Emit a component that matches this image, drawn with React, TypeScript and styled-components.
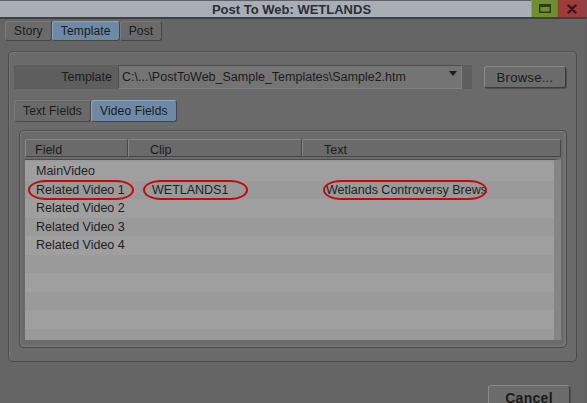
import React from "react";
import styled, { createGlobalStyle } from "styled-components";

const Global = createGlobalStyle`
  html, body { margin: 0; padding: 0; background: #666; overflow: hidden; }
  * { box-sizing: border-box; }
`;

const Window = styled.div`
  width: 587px;
  height: 403px;
  background: #656565;
  display: flex;
  flex-direction: column;
  font-family: "Liberation Sans", Arial, sans-serif;
  font-size: 12px;
  color: #1c1c1c;
  overflow: hidden;
  border-right: 1px solid #5a5a5a;
`;

const TitleBar = styled.div`
  height: 19px;
  flex: none;
  display: flex;
  align-items: stretch;
  background: #a8aeb4;
  border-top: 1px solid #5e6268;
  border-bottom: 2px solid #3f4042;
`;

const Title = styled.div`
  flex: 1;
  display: flex;
  align-items: center;
  justify-content: center;
  padding-left: 52px;
  font-weight: bold;
  font-size: 13px;
  color: #2a2f36;
`;

const WinButton = styled.div<{ $kind: "max" | "close" }>`
  width: ${(p) => (p.$kind === "max" ? "26px" : "29px")};
  margin-top: -1px;
  display: flex;
  align-items: center;
  justify-content: center;
  background: ${(p) => (p.$kind === "max" ? "#6f8f2c" : "#9c3c3c")};
  border-left: 1px solid ${(p) => (p.$kind === "max" ? "#8aa846" : "#b05454")};
`;

const Body = styled.div`
  flex: 1;
  display: flex;
  flex-direction: column;
  padding: 2px 0 0 5px;
`;

const TabRow = styled.div`
  display: flex;
  height: 20px;
  flex: none;
`;

const Tab = styled.div<{ $active?: boolean }>`
  display: flex;
  align-items: center;
  padding: 0 8px;
  background: ${(p) => (p.$active ? "#6e89a5" : "#6a6a6a")};
  border: 1px solid #464646;
  border-top-color: ${(p) => (p.$active ? "#8ea6bd" : "#7a7a7a")};
  border-left-color: ${(p) => (p.$active ? "#8ea6bd" : "#7a7a7a")};
  border-radius: 3px;
  color: #1b1b1b;
  letter-spacing: 0.15px;
`;

const Panel = styled.div`
  margin: 10px 0 0 3px;
  width: 569px;
  height: 311px;
  flex: none;
  background: #6a6a6a;
  border: 1px solid #4c4c4c;
  border-top-color: #525252;
  border-radius: 5px;
  box-shadow: inset 1px 1px 0 #767676;
  display: flex;
  flex-direction: column;
  padding: 13px 0 0 5px;
`;

const TemplateRow = styled.div`
  display: flex;
  height: 24px;
  align-items: stretch;
`;

const FieldLabel = styled.div`
  width: 104px;
  background: #5e5e5e;
  display: flex;
  align-items: center;
  justify-content: flex-end;
  padding-right: 6px;
  font-size: 12.5px;
`;

const Combo = styled.div`
  width: 344px;
  background: #747474;
  border-top: 1px solid #4e4e4e;
  border-left: 1px solid #4e4e4e;
  border-right: 1px solid #808080;
  border-bottom: 1px solid #808080;
  display: flex;
  align-items: center;
  padding-left: 3px;
  font-size: 12.5px;
`;

const ComboText = styled.span`
  flex: 1;
`;

const ComboArrow = styled.span`
  width: 0;
  height: 0;
  border-left: 4px solid transparent;
  border-right: 4px solid transparent;
  border-top: 5px solid #1c1c1c;
  margin: -8px 4px 0 0;
`;

const ComboTail = styled.div`
  width: 10px;
  background: #5e5e5e;
`;

const Button = styled.div<{ $bold?: boolean }>`
  display: flex;
  align-items: center;
  justify-content: center;
  height: 22px;
  width: 82px;
  background: #6c6c6c;
  border: 1px solid #3d3d3d;
  border-top-color: #8a8a8a;
  border-left-color: #8a8a8a;
  border-radius: 3px;
  box-shadow: 1px 1px 0 #4f4f4f;
  font-size: ${(p) => (p.$bold ? "14px" : "13px")};
  font-weight: ${(p) => (p.$bold ? "bold" : "normal")};
  padding-top: ${(p) => (p.$bold ? "4px" : "0")};
  color: #1b1b1b;
  letter-spacing: 0.3px;
`;

const BrowseWrap = styled.div`
  margin-left: 12px;
  padding-top: 1px;
`;

const SubTabRow = styled.div`
  display: flex;
  height: 22px;
  margin-top: 11px;
`;

const TableFrame = styled.div`
  margin: 8px 0 0 5px;
  width: 548px;
  height: 218px;
  background: #6b6b6b;
  border: 1px solid #4a4a4a;
  border-top-color: #515151;
  border-radius: 5px;
  box-shadow: inset 1px 1px 0 #7a7a7a, inset -2px -2px 0 #757575;
  padding: 8px 5px 7px 5px;
  display: flex;
  flex-direction: column;
`;

const Columns = `
  display: grid;
  grid-template-columns: 103px 174px 1fr;
`;

const HeaderRow = styled.div`
  ${Columns}
  height: 18px;
  flex: none;
`;

const HeaderCell = styled.div`
  background: #6a6a6a;
  border: 1px solid #474747;
  border-top-color: #858585;
  border-left-color: #858585;
  border-radius: 2px 2px 0 0;
  padding: 3px 0 0 21px;
  line-height: 15px;
  font-size: 12.5px;
  overflow: hidden;
  &:first-child { padding-left: 9px; }
`;

const TableBody = styled.div`
  flex: 1;
  margin-top: 2px;
  background: #9a9a9a;
  border-top: 1px solid #4e4e4e;
  border-right: 7px solid #858585;
  padding-top: 2px;
  overflow: hidden;
  display: flex;
  flex-direction: column;
`;

const Row = styled.div<{ $odd: boolean }>`
  ${Columns}
  flex: none;
  height: 18.5px;
  background: ${(p) => (p.$odd ? "#9a9a9a" : "#9f9f9f")};
`;

const Cell = styled.div`
  position: relative;
  display: flex;
  align-items: center;
  padding-left: 24px;
  white-space: nowrap;
  font-size: 12.5px;
  color: #1e1e1e;
  &:first-child { padding-left: 11px; }
`;

const Ellipse = styled.span<{ $left: number; $width: number }>`
  position: absolute;
  left: ${(p) => p.$left}px;
  width: ${(p) => p.$width}px;
  top: -1px;
  height: 20px;
  border: 2.5px solid #c90808;
  border-radius: 18px / 10px;
  pointer-events: none;
`;

const Footer = styled.div`
  display: flex;
  justify-content: flex-end;
  padding: 23px 16px 0 0;
`;

const rows: [string, string, string][] = [
  ["MainVideo", "", ""],
  ["Related Video 1", "WETLANDS1", "Wetlands Controversy Brews"],
  ["Related Video 2", "", ""],
  ["Related Video 3", "", ""],
  ["Related Video 4", "", ""],
  ["", "", ""],
  ["", "", ""],
  ["", "", ""],
  ["", "", ""],
  ["", "", ""],
];

export default function App() {
  return (
    <>
      <Global />
      <Window>
        <TitleBar>
          <Title>Post To Web: WETLANDS</Title>
          <WinButton $kind="max">
            <svg width="12" height="9" viewBox="0 0 12 9">
              <rect x="0.75" y="0.75" width="10.5" height="7.5" fill="none" stroke="#2e3a1a" strokeWidth="1.5" />
              <rect x="1" y="1" width="10" height="2" fill="#2e3a1a" />
            </svg>
          </WinButton>
          <WinButton $kind="close">
            <svg width="10" height="10" viewBox="0 0 10 10">
              <path d="M1.5 1.5 L8.5 8.5 M8.5 1.5 L1.5 8.5" stroke="#3a1414" strokeWidth="2.4" strokeLinecap="round" />
            </svg>
          </WinButton>
        </TitleBar>
        <Body>
          <TabRow>
            <Tab>Story</Tab>
            <Tab $active>Template</Tab>
            <Tab>Post</Tab>
          </TabRow>
          <Panel>
            <TemplateRow>
              <FieldLabel>Template</FieldLabel>
              <Combo>
                <ComboText>C:\...\PostToWeb_Sample_Templates\Sample2.htm</ComboText>
                <ComboArrow />
              </Combo>
              <ComboTail />
              <BrowseWrap>
                <Button>Browse...</Button>
              </BrowseWrap>
            </TemplateRow>
            <SubTabRow>
              <Tab>Text Fields</Tab>
              <Tab $active>Video Fields</Tab>
            </SubTabRow>
            <TableFrame>
              <HeaderRow>
                <HeaderCell>Field</HeaderCell>
                <HeaderCell>Clip</HeaderCell>
                <HeaderCell>Text</HeaderCell>
              </HeaderRow>
              <TableBody>
                {rows.map((r, i) => (
                  <Row key={i} $odd={i % 2 === 1}>
                    <Cell>
                      {r[0]}
                      {i === 1 && <Ellipse $left={3} $width={106} />}
                    </Cell>
                    <Cell>
                      {r[1]}
                      {i === 1 && <Ellipse $left={15} $width={105} />}
                    </Cell>
                    <Cell>
                      {r[2]}
                      {i === 1 && <Ellipse $left={21} $width={164} />}
                    </Cell>
                  </Row>
                ))}
              </TableBody>
            </TableFrame>
          </Panel>
          <Footer>
            <Button $bold>Cancel</Button>
          </Footer>
        </Body>
      </Window>
    </>
  );
}
